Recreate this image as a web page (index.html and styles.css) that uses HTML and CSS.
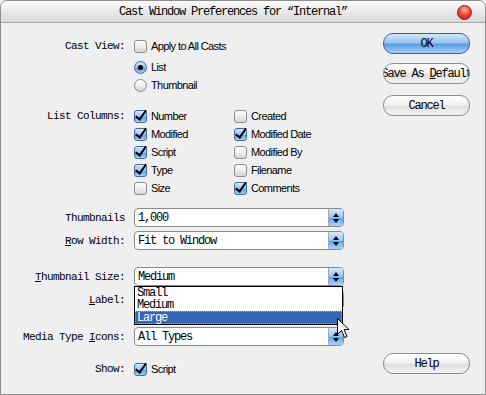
FILE: index.html
```html
<!DOCTYPE html>
<html lang="en">

<head>
    <meta charset="utf-8" />
    <title>Cast Window Preferences</title>
    <link rel="stylesheet" href="styles.css">
</head>

<body>
    <div class="window">
        <div class="titlebar">
            <span class="title">Cast Window Preferences for “Internal”</span>
            <span class="close"></span>
        </div>

        <div class="content">
            <div class="form">
                <!-- Cast View -->
                <div class="row r-cast">
                    <div class="label">Cast View:</div>
                    <div class="check"><span class="box"></span>Apply to All Casts</div>
                </div>
                <div class="row r-list">
                    <div class="label"></div>
                    <div class="check"><span class="radio on"></span>List</div>
                </div>
                <div class="row">
                    <div class="label"></div>
                    <div class="check"><span class="radio"></span>Thumbnail</div>
                </div>

                <!-- List Columns -->
                <div class="row r-columns">
                    <div class="label">List Columns:</div>
                    <div class="columns">
                        <div class="check"><span class="box on"></span>Number</div>
                        <div class="check"><span class="box"></span>Created</div>
                        <div class="check"><span class="box on"></span>Modified</div>
                        <div class="check"><span class="box on"></span>Modified Date</div>
                        <div class="check"><span class="box on"></span>Script</div>
                        <div class="check"><span class="box"></span>Modified By</div>
                        <div class="check"><span class="box on"></span>Type</div>
                        <div class="check"><span class="box"></span>Filename</div>
                        <div class="check"><span class="box"></span>Size</div>
                        <div class="check"><span class="box on"></span>Comments</div>
                    </div>
                </div>

                <!-- selects -->
                <div class="row sel r-thumbs">
                    <div class="label">Thumbnails</div>
                    <div class="select"><span class="val">1,000</span><span class="spin"></span></div>
                </div>
                <div class="row sel r-width">
                    <div class="label"><u>R</u>ow Width:</div>
                    <div class="select"><span class="val">Fit to Window</span><span class="spin"></span></div>
                </div>
                <div class="row sel r-size">
                    <div class="label"><u>T</u>humbnail Size:</div>
                    <div class="select"><span class="val">Medium</span><span class="spin"></span></div>
                </div>
                <div class="row sel r-label">
                    <div class="label"><u>L</u>abel:</div>
                    <div class="select"><span class="spin"></span></div>
                </div>
                <div class="row sel r-media">
                    <div class="label">Media Type <u>I</u>cons:</div>
                    <div class="select"><span class="val">All Types</span><span class="spin"></span></div>
                </div>

                <div class="row r-show">
                    <div class="label">Show:</div>
                    <div class="check"><span class="box on"></span>Script</div>
                </div>
            </div>

            <div class="buttons">
                <div class="btn default"><span>OK</span></div>
                <div class="btn b-save"><span>Save As <u>D</u>efault</span></div>
                <div class="btn b-cancel"><span>Cancel</span></div>
                <div class="btn b-help"><span>Help</span></div>
            </div>
        </div>

        <!-- open popup of Thumbnail Size -->
        <div class="popup">
            <div class="item">Small</div>
            <div class="item">Medium</div>
            <div class="item hot">Large</div>
        </div>

        <svg class="cursor" width="13" height="21" viewBox="0 0 13 21">
            <path d="M0.5 0.5 L0.5 16.5 L4.5 12.5 L7.5 19.5 L10 18.5 L7 11.5 L12 11.5 Z" fill="#fff" stroke="#000" stroke-width="1" />
        </svg>
    </div>
</body>
</html>
```

FILE: styles.css
```css
body {
    margin: 0;
    background: #efefef;
}

.window {
    position: relative;
    width: 484px;
    height: 393px;
    border: 1px solid #8e8e8e;
    border-radius: 7px 7px 0 0;
    background: #efefef;
    overflow: hidden;
    font-family: "Liberation Mono", "DejaVu Sans Mono", monospace;
    font-size: 11px;
    letter-spacing: -0.6px;
    color: #000;
}

.titlebar {
    position: relative;
    height: 21px;
    padding-right: 20px;
    border-bottom: 1px solid #a6a6a6;
    background: linear-gradient(#fbfbfb, #e6e6e6 60%, #d9d9d9);
    text-align: center;
    line-height: 22px;
}

.title {
    font-size: 12px;
    letter-spacing: -1.2px;
}

.close {
    position: absolute;
    right: 13px;
    top: 4px;
    width: 13px;
    height: 13px;
    border-radius: 50%;
    border: 1px solid #8a1d1d;
    background: radial-gradient(circle at 50% 30%, #ffb0a8 0, #f04a3c 45%, #b8150f 100%);
}

.content {
    display: flex;
    height: 371px;
}

.form {
    width: 348px;
    padding-top: 14px;
}

.row {
    display: grid;
    grid-template-columns: 124px 210px;
    column-gap: 9px;
    align-items: center;
    height: 18px;
}

.label {
    text-align: right;
    white-space: nowrap;
}

.r-list { margin-top: 3px; }
.r-columns { margin-top: 13px; height: 90px; align-items: start; }
.r-columns .label { line-height: 18px; }
.r-thumbs { margin-top: 11px; }
.r-width { margin-top: 4px; }
.r-size { margin-top: 17px; }
.r-label { margin-top: 4px; }
.r-media { margin-top: 18px; }
.r-show { margin-top: 14px; }

.sel {
    height: 19px;
}

.columns {
    display: grid;
    grid-template-columns: 100px 110px;
    grid-auto-rows: 18px;
    align-items: center;
}

.check {
    display: flex;
    align-items: center;
    gap: 4px;
    font-family: "Liberation Sans", Arial, sans-serif;
    font-size: 11px;
    letter-spacing: -0.6px;
    white-space: nowrap;
}

.box, .radio {
    position: relative;
    flex: none;
    width: 11px;
    height: 11px;
    border: 1px solid #8d8d8d;
    border-radius: 3px;
    background: linear-gradient(#ffffff, #e9e9e9 60%, #d6d6d6);
}

.radio {
    border-radius: 50%;
}

.box.on, .radio.on {
    border-color: #4a6a96;
    background: linear-gradient(#d3e9fd, #8ec2f2 50%, #5d9fe3 55%, #9fd0fa);
}

.box.on::after {
    content: "";
    position: absolute;
    left: 3px;
    top: -3px;
    width: 4px;
    height: 10px;
    border: solid #000;
    border-width: 0 2px 2px 0;
    transform: rotate(35deg);
}

.radio.on::after {
    content: "";
    position: absolute;
    left: 3px;
    top: 3px;
    width: 5px;
    height: 5px;
    border-radius: 50%;
    background: #000;
}

.select {
    display: flex;
    justify-content: flex-end;
    height: 17px;
    border: 1px solid #8a8a8a;
    border-radius: 4px;
    background: #fff;
    overflow: hidden;
}

.val {
    flex: 1;
    padding-left: 3px;
    line-height: 18px;
    font-size: 12px;
    letter-spacing: -1.2px;
}

.spin {
    position: relative;
    width: 14px;
    border-left: 1px solid #9ab;
    background: linear-gradient(#d8ecfd, #8fc4f4 50%, #5aa0ea 52%, #a8d6fb);
}

.spin::before, .spin::after {
    content: "";
    position: absolute;
    left: 4px;
    border-left: 3px solid transparent;
    border-right: 3px solid transparent;
}

.spin::before {
    top: 4px;
    border-bottom: 4px solid #000;
}

.spin::after {
    top: 10px;
    border-top: 4px solid #000;
}

.buttons {
    display: flex;
    flex-direction: column;
    width: 87px;
    margin-left: 34px;
    padding-top: 10px;
    padding-bottom: 20px;
}

.btn {
    display: flex;
    justify-content: center;
    height: 19px;
    border: 1px solid #8b8b8b;
    border-radius: 10px;
    background: linear-gradient(#ffffff, #f2f2f2 45%, #e0e0e0 55%, #f4f4f4);
    line-height: 20px;
    font-size: 12px;
    letter-spacing: -1.2px;
    white-space: nowrap;
    overflow: hidden;
}

.btn span {
    flex: none;
}

.btn.default {
    border-color: #3f5f8f;
    background: linear-gradient(#d6e9fb, #95c3f0 45%, #5c9be3 55%, #a4d1fa);
}

.b-save { margin-top: 9px; }
.b-cancel { margin-top: 11px; }
.b-help { margin-top: auto; }

.popup {
    position: absolute;
    left: 133px;
    top: 285px;
    width: 207px;
    height: 37px;
    border: 1px solid #000;
    background: #fff;
}

.item {
    height: 12px;
    line-height: 12px;
    padding-left: 2px;
    font-size: 12px;
    letter-spacing: -1.2px;
}

.item.hot {
    height: 11px;
    color: #fff;
    background: #3566b6;
    border: 1px dotted #d9a44a;
    line-height: 12px;
    padding-left: 1px;
}

.cursor {
    position: absolute;
    left: 336px;
    top: 317px;
}
```
